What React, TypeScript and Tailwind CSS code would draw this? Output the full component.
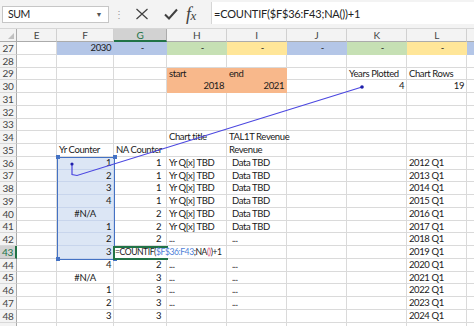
import React from "react";

type Cell = { t?: React.ReactNode; a?: "l" | "r" | "c" | "d"; f?: string; x?: string };

const WIDTHS = ["w-[40px]", "w-[57px]", "w-[53px]", "w-[60px]", "w-[60px]", "w-[60px]", "w-[60px]", "w-[60px]", "w-[60px]"];
const LETTERS = ["E", "F", "G", "H", "I", "J", "K", "L", ""];

const FILL: Record<string, string> = {
  b: "bg-[#b4c6e7] border-[#b4c6e7]",
  g: "bg-[#c6e0b4] border-[#c6e0b4]",
  y: "bg-[#ffe699] border-[#ffe699]",
  o: "bg-[#f8b88b] border-[#f8b88b]",
  s: "bg-[#dce6f5] border-[#c8d5ec]",
  n: "bg-white border-[#dadada]",
};

const ALIGN: Record<string, string> = {
  l: "justify-start pl-[2px]",
  r: "justify-end pr-[2px]",
  c: "justify-center",
  d: "justify-end pr-[22px]",
};

const yrCount = ["1", "2", "3", "4", "#N/A", "1", "2", "3", "4", "#N/A", "1", "2", "3"];
const naCount = ["1", "1", "1", "1", "2", "2", "2", "", "2", "3", "3", "3", "3"];

function buildRows() {
  const rows: { n: number; cells: Record<number, Cell> }[] = [];
  rows.push({
    n: 27,
    cells: {
      1: { t: "2030", a: "r", f: "b" },
      2: { t: "-", a: "d", f: "b" },
      3: { t: "-", a: "d", f: "g" },
      4: { t: "-", a: "d", f: "y" },
      5: { t: "-", a: "d", f: "b" },
      6: { t: "-", a: "d", f: "g" },
      7: { t: "-", a: "d", f: "y" },
      8: { t: "", f: "b" },
    },
  });
  rows.push({ n: 28, cells: {} });
  rows.push({
    n: 29,
    cells: {
      3: { t: "start", f: "o" },
      4: { t: "end", f: "o" },
      6: { t: "Years Plotted" },
      7: { t: "Chart Rows" },
    },
  });
  rows.push({
    n: 30,
    cells: {
      3: { t: "2018", a: "r", f: "o" },
      4: { t: "2021", a: "r", f: "o" },
      6: { t: "4", a: "r" },
      7: { t: "19", a: "r" },
    },
  });
  rows.push({ n: 31, cells: {} });
  rows.push({ n: 32, cells: {} });
  rows.push({ n: 33, cells: {} });
  rows.push({ n: 34, cells: { 3: { t: "Chart title" }, 4: { t: "TAL1T Revenue" } } });
  rows.push({ n: 35, cells: { 1: { t: "Yr Counter" }, 2: { t: "NA Counter" }, 4: { t: "Revenue" } } });
  for (let i = 0; i < 13; i++) {
    const n = 36 + i;
    const cells: Record<number, Cell> = {};
    const yc = yrCount[i];
    cells[1] = { t: yc, a: yc === "#N/A" ? "c" : "r", f: n <= 43 ? "s" : "n" };
    if (naCount[i]) cells[2] = { t: naCount[i], a: "r", x: "pr-[5px]" };
    if (n <= 41) {
      cells[3] = { t: "Yr Q[x] TBD" };
      cells[4] = { t: "Data TBD", x: "pl-[5px]" };
    } else if (n <= 47 && n !== 43) {
      cells[3] = { t: "..." };
      cells[4] = { t: "...", x: "pl-[5px]" };
    }
    cells[7] = { t: `${2012 + i} Q1` };
    rows.push({ n, cells });
  }
  rows.push({ n: 0, cells: {} });
  return rows;
}

function FormulaBar() {
  return (
    <div className="h-[29px] bg-[#f3f3f3] flex items-center border-b border-[#d6d6d6]">
      <div className="ml-[2px] w-[107px] h-[17px] bg-white border border-[#c6c6c6] flex items-center pl-[5px] pr-[6px] text-[10.5px] text-[#222]">
        <span className="flex-1">SUM</span>
        <span className="text-[7px] text-[#555]">▼</span>
      </div>
      <div className="w-[20px] flex justify-center text-[#9a9a9a] text-[10px]">⋮</div>
      <div className="w-[82px] flex items-center pl-[6px]">
        <svg width="14" height="12" viewBox="0 0 14 12" className="mr-[15px]">
          <path d="M1.5 1 L12.5 11 M12.5 1 L1.5 11" stroke="#404040" strokeWidth="1.2" fill="none" />
        </svg>
        <svg width="14" height="12" viewBox="0 0 14 12" className="mr-[8px]">
          <path d="M1 6.5 L5 10.5 L13 1.5" stroke="#404040" strokeWidth="2" fill="none" />
        </svg>
        <span className="[font-family:'Liberation_Serif',serif] italic text-[18px] leading-none text-[#404040]">
          f<span className="text-[13px]">x</span>
        </span>
      </div>
      <div className="flex-1 h-[22px] bg-white border-l border-[#d6d6d6] flex items-center pl-[2px] text-[11px] tracking-[-0.2px] text-[#222] self-start mt-[2px]">
        =COUNTIF($F$36:F43;NA())+1
      </div>
    </div>
  );
}

function HeaderRow() {
  return (
    <div className="flex h-[13px] bg-[#f3f3f3]">
      <div className="w-[17px] shrink-0 border-r border-b border-[#ababab] relative">
        <div className="absolute right-[2px] bottom-[2px] w-0 h-0 border-l-[6px] border-l-transparent border-b-[6px] border-b-[#c0c0c0]" />
      </div>
      {LETTERS.map((l, i) =>
        l === "G" ? (
          <div
            key={i}
            className={`${WIDTHS[i]} shrink-0 flex items-center justify-center bg-[#d2d2d2] border-r border-[#ababab] border-b-2 border-b-[#217346] text-[#217346] text-[10px]`}
          >
            {l}
          </div>
        ) : (
          <div
            key={i}
            className={`${WIDTHS[i]} shrink-0 flex items-center justify-center border-r border-b border-[#d0d0d0] border-b-[#ababab] text-[#444] text-[10px]`}
          >
            {l}
          </div>
        )
      )}
    </div>
  );
}

function Row({ n, cells }: { n: number; cells: Record<number, Cell> }) {
  const active = n === 43;
  return (
    <div className="flex h-[12.75px]">
      {active ? (
        <div className="w-[17px] shrink-0 flex items-center justify-center bg-[#d2d2d2] border-b border-[#ababab] border-r-2 border-r-[#217346] text-[#217346] text-[10px]">
          {n}
        </div>
      ) : (
        <div className="w-[17px] shrink-0 flex items-center justify-center bg-[#f3f3f3] border-r border-[#ababab] border-b border-b-[#d8d8d8] text-[#444] text-[10px]">
          {n || ""}
        </div>
      )}
      {WIDTHS.map((w, i) => {
        const c = cells[i] || {};
        return (
          <div
            key={i}
            className={`${w} shrink-0 flex items-center border-r border-b whitespace-nowrap text-[#1a1a1a] ${FILL[c.f || "n"]} ${ALIGN[c.a || "l"]} ${c.x || ""}`}
          >
            <span className="relative z-10">{c.t}</span>
          </div>
        );
      })}
    </div>
  );
}

function Overlays() {
  return (
    <>
      {/* selected range F36:F43 */}
      <div className="absolute z-20 left-[57px] top-[156.75px] w-[58px] h-[103px] border border-[#4472c4] pointer-events-none">
        <div className="absolute -left-[2.5px] -top-[2.5px] w-[4px] h-[4px] bg-[#4472c4]" />
        <div className="absolute -right-[2.5px] -top-[2.5px] w-[4px] h-[4px] bg-[#4472c4]" />
        <div className="absolute -left-[2.5px] -bottom-[2.5px] w-[4px] h-[4px] bg-[#4472c4]" />
        <div className="absolute -right-[2.5px] -bottom-[2.5px] w-[4px] h-[4px] bg-[#4472c4]" />
      </div>
      {/* active cell G43 in edit mode */}
      <div className="absolute z-20 left-[113px] top-[245.5px] w-[55px] h-[14px] border-2 border-[#217346]" />
      <div className="absolute z-20 left-[115px] top-[247.5px] h-[10px] bg-white flex items-center text-[8.6px] tracking-[-0.45px] text-[#1a1a1a] whitespace-nowrap pr-[2px]">
        =COUNTIF(<span className="text-[#4f7fd8]">$F$36:F43</span>;NA<span className="text-[#e0507a]">()</span>)+1
      </div>
      {/* connector line */}
      <svg className="absolute z-30 left-0 top-0 pointer-events-none" width="474" height="326">
        <polyline points="72,164 72,174.5 77,175.5 362,87" fill="none" stroke="#4b47e0" strokeWidth="1.2" />
        <circle cx="72" cy="164" r="1.6" fill="#1e1eaa" />
        <circle cx="362" cy="87" r="1.8" fill="#1e1eaa" />
      </svg>
    </>
  );
}

export default function App() {
  const rows = buildRows();
  return (
    <div className="w-[474px] h-[326px] overflow-hidden bg-white relative [font-family:Lato,sans-serif] text-[9.5px] tracking-[-0.4px] leading-none">
      <FormulaBar />
      <HeaderRow />
      {rows.map((r, i) => (
        <Row key={i} n={r.n} cells={r.cells} />
      ))}
      <Overlays />
    </div>
  );
}
